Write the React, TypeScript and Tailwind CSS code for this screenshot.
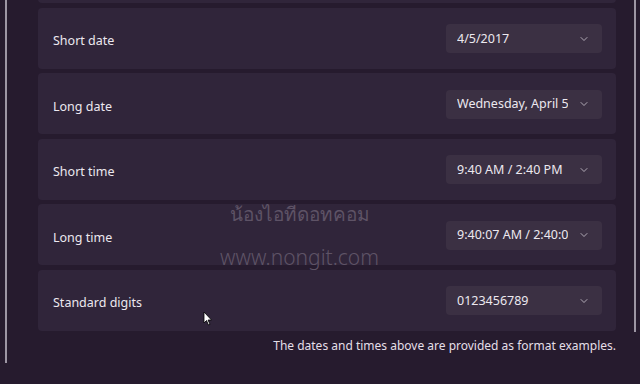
import { ChevronDown } from "lucide-react";

const rows = [
  { label: "Short date", value: "4/5/2017" },
  { label: "Long date", value: "Wednesday, April 5, 2017" },
  { label: "Short time", value: "9:40 AM / 2:40 PM" },
  { label: "Long time", value: "9:40:07 AM / 2:40:07 PM" },
  { label: "Standard digits", value: "0123456789" },
];

const Row = ({ label, value }: { label: string; value: string }) => (
  <div className="h-[61px] shrink-0 rounded-[4px] bg-[#30253a] flex items-center justify-between pl-[15px] pr-[14px]">
    <span className="mt-[7px] text-[12.5px] text-[#ece8ef]">{label}</span>
    <div className="w-[156px] h-[29px] mt-[1px] rounded-[4px] bg-[#3b3043] flex items-center pl-[11px] pr-[12px]">
      <span className="flex-1 mt-[1px] overflow-hidden whitespace-nowrap text-[12.5px] text-[#ece8ef]">{value}</span>
      <ChevronDown className="ml-[10px] text-[#d6d0da]" size={12} strokeWidth={1.5} />
    </div>
  </div>
);

export default function App() {
  return (
    <div
      className="relative w-[640px] h-[384px] overflow-hidden bg-[#261b2e] flex"
      style={{ fontFamily: '"Noto Sans", "Open Sans", sans-serif' }}
    >
      <div className="w-[38px] shrink-0 pl-[5px]">
        <div className="w-[2px] h-[363px] bg-[#9d96a4]" />
      </div>

      <div className="w-[578px] shrink-0 flex flex-col gap-[4.5px] -mt-[58px]">
        <div className="h-[61px] shrink-0 rounded-[4px] bg-[#30253a]" />
        {rows.map((r) => (
          <Row key={r.label} label={r.label} value={r.value} />
        ))}
        <p className="mt-[2px] text-right text-[12px] text-[#e4dfe8]">
          The dates and times above are provided as format examples.
        </p>
      </div>

      <div className="w-[18px] shrink-0" />
      <div className="w-[2px] h-[332px] bg-[#9d96a4] shrink-0" />

      <div
        className="absolute left-[230px] top-[200px] text-[19px] text-[#5e5366] whitespace-nowrap"
        style={{ fontFamily: '"Noto Sans", "DejaVu Sans", sans-serif' }}
      >
        น้องไอทีดอทคอม
      </div>
      <div className="absolute left-[220px] top-[242px] text-[21px] font-light text-[#5e5366] whitespace-nowrap">
        www.nongit.com
      </div>

      <svg className="absolute left-[203px] top-[311px]" width="10" height="15" viewBox="0 0 10 15">
        <path d="M1 1 L1 12 L3.5 9.5 L5.5 14 L7 13.3 L5 9 L8.5 9 Z" fill="#ffffff" stroke="#000000" strokeWidth="0.8" />
      </svg>
    </div>
  );
}
